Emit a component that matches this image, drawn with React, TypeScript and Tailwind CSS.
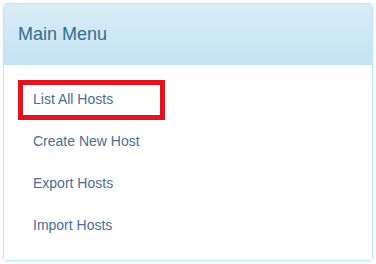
import React from 'react';

const items = ['List All Hosts', 'Create New Host', 'Export Hosts', 'Import Hosts'];

const App: React.FC = () => {
  return (
    <div className="w-[376px] h-[264px] bg-white p-[3px] font-['Liberation_Sans',Arial,sans-serif]">
      {/* panel */}
      <div className="w-[370px] h-[258px] border border-[#bce8f1] rounded-[4px] shadow-[0_1px_2px_rgba(0,0,0,0.06)] flex flex-col overflow-hidden">
        <div className="h-[61px] shrink-0 bg-gradient-to-b from-[#d9edf7] to-[#c4e3f3] border-b border-[#bce8f1] px-[14px] flex items-center">
          <h3 className="text-[18px] leading-none text-[#31708f] pb-[1px]">Main Menu</h3>
        </div>
        <ul className="flex-1 bg-white pt-[14px]">
          {items.map((label, i) => (
            <li key={label} className="h-[42px] flex items-center">
              <a
                href="#"
                className={
                  'ml-[14px] w-[147px] h-[40px] flex items-center pl-[10px] pb-[1px] border-[5px] text-[14px] text-[#4a6d91] ' +
                  (i === 0 ? 'border-[#e2151f]' : 'border-transparent')
                }
              >
                {label}
              </a>
            </li>
          ))}
        </ul>
      </div>
    </div>
  );
};

export default App;
